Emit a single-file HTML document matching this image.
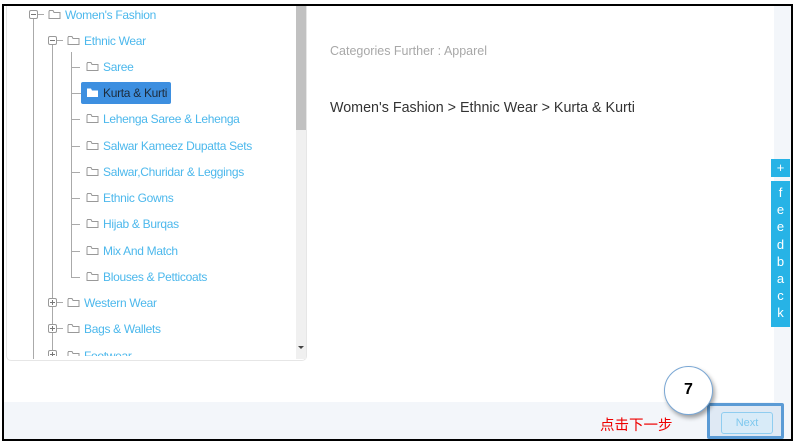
<!DOCTYPE html>
<html><head><meta charset="utf-8"><style>
*{margin:0;padding:0;box-sizing:border-box}
body{width:799px;height:446px;background:#fff;position:relative;overflow:hidden;font-family:"Liberation Sans","DejaVu Sans",sans-serif}
.a{position:absolute}
.t{position:absolute;font-size:12px;color:#4cb8ec;white-space:nowrap;line-height:14px;letter-spacing:-0.3px}
.f{position:absolute;width:13px;height:11px}
.vl{position:absolute;width:1px;background:#aaa}
.hl{position:absolute;height:1px;background:#aaa;width:9px}
.ex{position:absolute;width:9px;height:9px;border:1px solid #999;border-radius:2px;background:#fff}
.ex:before{content:"";position:absolute;left:1px;top:3px;width:5px;height:1px;background:#777}
.ex.p:after{content:"";position:absolute;left:3px;top:1px;width:1px;height:5px;background:#777}
</style></head><body>
<div class="a" style="left:2px;top:4px;width:791px;height:437px;border:2px solid #000;background:#f3f6fa"></div>
<div class="a" style="left:4px;top:6px;width:770px;height:396px;background:#fff"></div>
<div class="a" style="left:6px;top:6px;width:301px;height:355px;border:1px solid #e6e6e6;border-top:none;border-radius:0 0 5px 5px;background:#fff"></div>
<div class="a" style="left:296px;top:6px;width:10px;height:353px;background:#f0f0f0"></div>
<div class="a" style="left:296px;top:6px;width:10px;height:124px;background:#c1c1c1"></div>
<div class="a" style="left:298px;top:346px;width:0;height:0;border-left:3px solid transparent;border-right:3px solid transparent;border-top:3px solid #444"></div>
<div class="vl" style="left:33px;top:18px;height:341px"></div>
<div class="vl" style="left:52px;top:44px;height:312px"></div>
<div class="vl" style="left:71px;top:52px;height:225px"></div>
<svg width="0" height="0" style="position:absolute"><defs><symbol id="fo" viewBox="0 0 13 11"><path d="M1 2.5V9.5H12V3.5H6L5 1.5H1.5Z" fill="none" stroke="#999" stroke-width="1"/></symbol></defs></svg>
<div class="ex" style="left:29px;top:10px"></div><div class="hl" style="left:38px;top:14px;width:6px"></div>
<svg class="f" style="left:48px;top:9px"><use href="#fo"/></svg><div class="t" style="left:65px;top:8px">Women's Fashion</div>
<div class="ex" style="left:48px;top:36px"></div><div class="hl" style="left:57px;top:40px;width:6px"></div>
<svg class="f" style="left:67px;top:35px"><use href="#fo"/></svg><div class="t" style="left:84px;top:34px">Ethnic Wear</div>

<div class="hl" style="left:71px;top:67px"></div><svg class="f" style="left:86px;top:61px"><use href="#fo"/></svg><div class="t" style="left:103px;top:60px">Saree</div>
<div class="a" style="left:81px;top:82px;width:90px;height:22px;background:#3d8fe0;border-radius:2px"></div>
<div class="hl" style="left:71px;top:93px;width:10px"></div>
<svg class="f" style="left:86px;top:87px"><path d="M1 2V10H12V3.5H6L5 1.5H1Z" fill="#fff"/></svg><div class="t" style="left:103px;top:86px;color:#1d2b3a">Kurta &amp; Kurti</div>
<div class="hl" style="left:71px;top:119px"></div><svg class="f" style="left:86px;top:113px"><use href="#fo"/></svg><div class="t" style="left:103px;top:112px">Lehenga Saree &amp; Lehenga</div>
<div class="hl" style="left:71px;top:146px"></div><svg class="f" style="left:86px;top:140px"><use href="#fo"/></svg><div class="t" style="left:103px;top:139px">Salwar Kameez Dupatta Sets</div>
<div class="hl" style="left:71px;top:172px"></div><svg class="f" style="left:86px;top:166px"><use href="#fo"/></svg><div class="t" style="left:103px;top:165px">Salwar,Churidar &amp; Leggings</div>
<div class="hl" style="left:71px;top:198px"></div><svg class="f" style="left:86px;top:192px"><use href="#fo"/></svg><div class="t" style="left:103px;top:191px">Ethnic Gowns</div>
<div class="hl" style="left:71px;top:224px"></div><svg class="f" style="left:86px;top:218px"><use href="#fo"/></svg><div class="t" style="left:103px;top:217px">Hijab &amp; Burqas</div>
<div class="hl" style="left:71px;top:251px"></div><svg class="f" style="left:86px;top:245px"><use href="#fo"/></svg><div class="t" style="left:103px;top:244px">Mix And Match</div>
<div class="hl" style="left:71px;top:277px"></div><svg class="f" style="left:86px;top:271px"><use href="#fo"/></svg><div class="t" style="left:103px;top:270px">Blouses &amp; Petticoats</div>

<div class="ex p" style="left:48px;top:298px"></div><div class="hl" style="left:57px;top:302px;width:6px"></div>
<svg class="f" style="left:67px;top:297px"><use href="#fo"/></svg><div class="t" style="left:84px;top:296px">Western Wear</div>
<div class="ex p" style="left:48px;top:324px"></div><div class="hl" style="left:57px;top:328px;width:6px"></div>
<svg class="f" style="left:67px;top:323px"><use href="#fo"/></svg><div class="t" style="left:84px;top:322px">Bags &amp; Wallets</div>
<div class="a" style="left:40px;top:348px;width:100px;height:8px;overflow:hidden">
<div class="ex p" style="left:8px;top:2px"></div><svg class="f" style="left:27px;top:2px"><use href="#fo"/></svg><div class="t" style="left:44px;top:1px">Footwear</div></div>

<div class="a" style="left:330px;top:44px;font-size:12.5px;color:#a8a8a8">Categories Further : Apparel</div>
<div class="a" style="left:330px;top:100px;font-size:14.3px;color:#333">Women's Fashion &gt; Ethnic Wear &gt; Kurta &amp; Kurti</div>

<div class="a" style="left:771px;top:159px;width:19px;height:18px;background:#27b3e6;color:#fff;font-size:13px;text-align:center;line-height:18px">+</div>
<div class="a" style="left:771px;top:181px;width:19px;height:146px;background:#27b3e6;color:#fff;font-size:13px;text-align:center;line-height:17.2px;padding-top:3px">f<br>e<br>e<br>d<br>b<br>a<br>c<br>k</div>

<div class="a" style="left:600px;top:414px;font-size:14.5px;color:#e00;font-family:'Liberation Sans','Noto Sans CJK SC',sans-serif">点击下一步</div>
<div class="a" style="left:707px;top:403px;width:77px;height:36px;border:3px solid #5b9bd5;border-radius:2px;background:#dfe9f4"></div>
<div class="a" style="left:721px;top:412px;width:52px;height:22px;border:1px solid #8fcdf0;border-radius:3px;background:#d8ebf8;color:#7ec8ee;font-size:11px;text-align:center;line-height:20px">Next</div>
<div class="a" style="left:664px;top:366px;width:49px;height:49px;border-radius:50%;background:#fff;border:1.5px solid #7aa7d4;box-shadow:2px 3px 4px rgba(0,0,0,.35);font-size:16px;font-weight:bold;text-align:center;line-height:46px;color:#000">7</div>
</body></html>
